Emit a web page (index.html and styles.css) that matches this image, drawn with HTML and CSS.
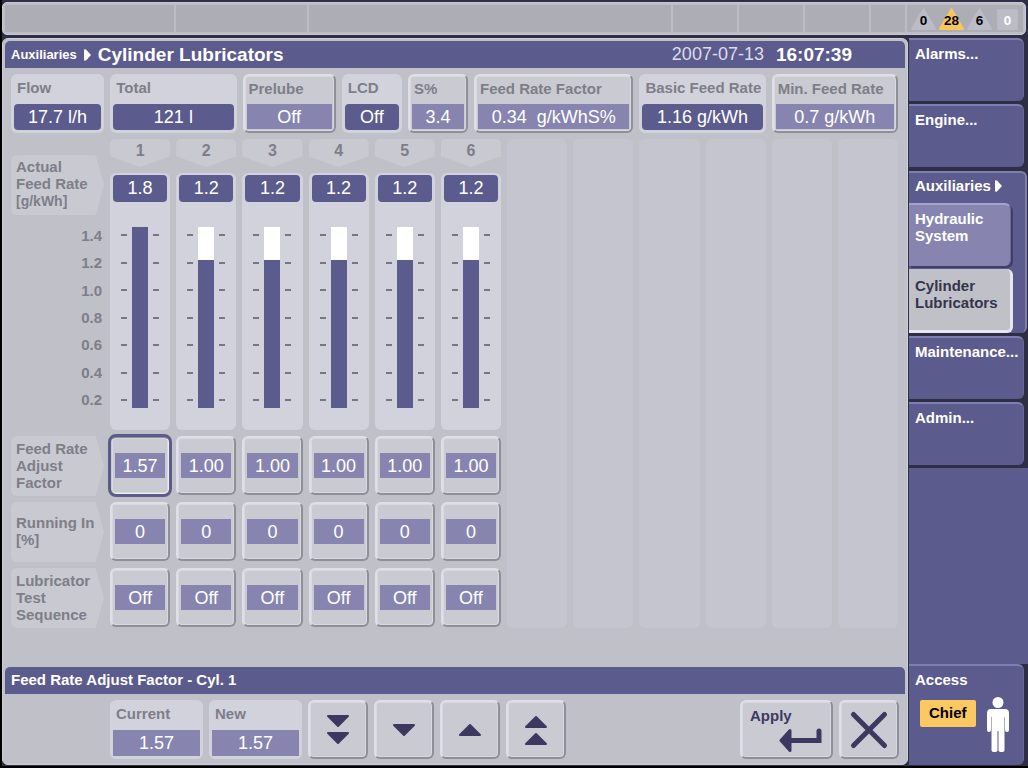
FILE: index.html
```html
<!DOCTYPE html>
<html lang="en">
<head>
<meta charset="utf-8">
<title>Cylinder Lubricators</title>
<link rel="stylesheet" href="styles.css">
</head>
<body>
<div class="screen">
  <header class="topbar">
    <div class="slots"><i></i><i></i><i></i><i></i><i></i><i></i><i></i></div>
    <div class="badges">
      <svg class="badge" viewBox="0 0 26 24" role="img" aria-label="0 alarms"><path class="tri" d="M13 3 24 22H2Z"/><text x="13" y="18">0</text></svg>
      <svg class="badge" viewBox="0 0 26 24" role="img" aria-label="28 unacknowledged"><path class="tri warn" d="M13 3 24 22H2Z"/><text x="13" y="18">28</text></svg>
      <svg class="badge" viewBox="0 0 26 24" role="img" aria-label="6 manual cut-out"><path class="tri" d="M13 3 24 22H2Z"/><text x="13" y="18">6</text></svg>
      <svg class="badge" viewBox="0 0 26 24" role="img" aria-label="0 invalidated"><path class="tri" d="M4 4H22V22H4Z"/><text class="pale" x="13" y="18">0</text></svg>
    </div>
  </header>

  <main class="panel">
    <div class="titlebar">
      <span class="crumb">Auxiliaries</span>
      <svg class="caret" viewBox="0 0 7 12"><path d="M0 1Q0 0 2 0.500L7 6 2 11.500Q0 12 0 11Z"/></svg>
      <h1>Cylinder Lubricators</h1>
      <span class="date">2007-07-13</span>
      <time class="time">16:07:39</time>
    </div>

    <div class="content">
      <section class="readings">
        <div class="card"><span class="label">Flow</span><span class="value">17.7 l/h</span></div>
        <div class="card"><span class="label">Total</span><span class="value">121 l</span></div>
        <button class="key card-key"><span class="label">Prelube</span><span class="value">Off</span></button>
        <div class="card"><span class="label">LCD</span><span class="value">Off</span></div>
        <button class="key card-key"><span class="label">S%</span><span class="value">3.4</span></button>
        <button class="key card-key"><span class="label">Feed Rate Factor</span><span class="value">0.34&nbsp; g/kWhS%</span></button>
        <div class="card"><span class="label">Basic Feed Rate</span><span class="value">1.16 g/kWh</span></div>
        <button class="key card-key"><span class="label">Min. Feed Rate</span><span class="value">0.7 g/kWh</span></button>
      </section>

      <section class="cylinders">
        <div class="axis">
          <div class="row-label">Actual<br>Feed Rate<br><span class="unit">[g/kWh]</span></div>
          <div class="scale"><span>1.4</span><span>1.2</span><span>1.0</span><span>0.8</span><span>0.6</span><span>0.4</span><span>0.2</span></div>
        </div>
        <div class="head">1</div><div class="head">2</div><div class="head">3</div><div class="head">4</div><div class="head">5</div><div class="head">6</div>
        <div class="spares"><i></i><i></i><i></i><i></i><i></i><i></i></div>

        <div class="gauge"><span class="value">1.8</span><div class="meter"><div class="ticks"><i></i><i></i><i></i><i></i><i></i><i></i><i></i></div><div class="bar"><div class="fill" style="height:100%"></div></div><div class="ticks"><i></i><i></i><i></i><i></i><i></i><i></i><i></i></div></div></div>
        <div class="gauge"><span class="value">1.2</span><div class="meter"><div class="ticks"><i></i><i></i><i></i><i></i><i></i><i></i><i></i></div><div class="bar"><div class="fill" style="height:82%"></div></div><div class="ticks"><i></i><i></i><i></i><i></i><i></i><i></i><i></i></div></div></div>
        <div class="gauge"><span class="value">1.2</span><div class="meter"><div class="ticks"><i></i><i></i><i></i><i></i><i></i><i></i><i></i></div><div class="bar"><div class="fill" style="height:82%"></div></div><div class="ticks"><i></i><i></i><i></i><i></i><i></i><i></i><i></i></div></div></div>
        <div class="gauge"><span class="value">1.2</span><div class="meter"><div class="ticks"><i></i><i></i><i></i><i></i><i></i><i></i><i></i></div><div class="bar"><div class="fill" style="height:82%"></div></div><div class="ticks"><i></i><i></i><i></i><i></i><i></i><i></i><i></i></div></div></div>
        <div class="gauge"><span class="value">1.2</span><div class="meter"><div class="ticks"><i></i><i></i><i></i><i></i><i></i><i></i><i></i></div><div class="bar"><div class="fill" style="height:82%"></div></div><div class="ticks"><i></i><i></i><i></i><i></i><i></i><i></i><i></i></div></div></div>
        <div class="gauge"><span class="value">1.2</span><div class="meter"><div class="ticks"><i></i><i></i><i></i><i></i><i></i><i></i><i></i></div><div class="bar"><div class="fill" style="height:82%"></div></div><div class="ticks"><i></i><i></i><i></i><i></i><i></i><i></i><i></i></div></div></div>

        <div class="row-label">Feed Rate<br>Adjust<br>Factor</div>
        <button class="key selected" aria-pressed="true"><span class="value">1.57</span></button>
        <button class="key"><span class="value">1.00</span></button>
        <button class="key"><span class="value">1.00</span></button>
        <button class="key"><span class="value">1.00</span></button>
        <button class="key"><span class="value">1.00</span></button>
        <button class="key"><span class="value">1.00</span></button>

        <div class="row-label">Running In<br>[%]</div>
        <button class="key"><span class="value">0</span></button>
        <button class="key"><span class="value">0</span></button>
        <button class="key"><span class="value">0</span></button>
        <button class="key"><span class="value">0</span></button>
        <button class="key"><span class="value">0</span></button>
        <button class="key"><span class="value">0</span></button>

        <div class="row-label">Lubricator<br>Test<br>Sequence</div>
        <button class="key"><span class="value">Off</span></button>
        <button class="key"><span class="value">Off</span></button>
        <button class="key"><span class="value">Off</span></button>
        <button class="key"><span class="value">Off</span></button>
        <button class="key"><span class="value">Off</span></button>
        <button class="key"><span class="value">Off</span></button>
      </section>
    </div>

    <h2 class="editbar">Feed Rate Adjust Factor - Cyl. 1</h2>
    <section class="editor">
      <div class="card edit"><span class="label">Current</span><span class="value">1.57</span></div>
      <div class="card edit"><span class="label">New</span><span class="value">1.57</span></div>
      <button class="key step" aria-label="Decrease fast"><svg class="icon" viewBox="0 0 54 54"><path class="arrow" d="M17 13H37L27 23ZM17 30H37L27 40Z"/></svg></button>
      <button class="key step" aria-label="Decrease"><svg class="icon" viewBox="0 0 54 54"><path class="arrow" d="M17 22H37L27 32Z"/></svg></button>
      <button class="key step" aria-label="Increase"><svg class="icon" viewBox="0 0 54 54"><path class="arrow" d="M17 32H37L27 22Z"/></svg></button>
      <button class="key step" aria-label="Increase fast"><svg class="icon" viewBox="0 0 54 54"><path class="arrow" d="M17 24H37L27 14ZM17 41H37L27 31Z"/></svg></button>
      <button class="key apply"><span>Apply</span><svg class="enter" viewBox="0 0 44 24"><path class="head-shape" d="M2 12.500 11 2.500V22.500Z"/><path class="stem" d="M10 12.500H40V3"/></svg></button>
      <button class="key step" aria-label="Cancel"><svg class="icon" viewBox="0 0 54 54"><path class="cross" d="M11.500 11.500 42.500 42.500M42.500 11.500 11.500 42.500"/></svg></button>
    </section>
  </main>

  <nav class="side">
    <button class="tab">Alarms...</button>
    <button class="tab">Engine...</button>
    <div class="group">
      <button class="group-title">Auxiliaries <svg class="caret" viewBox="0 0 7 12"><path d="M0 1Q0 0 2 0.500L7 6 2 11.500Q0 12 0 11Z"/></svg></button>
      <button class="tab sub">Hydraulic<br>System</button>
      <button class="tab sub current" aria-current="page">Cylinder<br>Lubricators</button>
    </div>
    <button class="tab">Maintenance...</button>
    <button class="tab">Admin...</button>
    <div class="filler"></div>
    <button class="tab access">
      <span>Access</span>
      <span class="access-row"><span class="role">Chief</span>
      <svg class="person" viewBox="0 0 22 56"><circle cx="11" cy="5.500" r="5.500"/><path d="M4 12H18Q22 12 22 16V33Q22 35 20 35T18 33V20H17.500V53Q17.500 55 14.500 55T11.500 53V34H10.500V53Q10.500 55 7.500 55T4.500 53V20H4V33Q4 35 2 35T0 33V16Q0 12 4 12Z"/></svg></span>
    </button>
  </nav>
</div>
</body>
</html>
```
FILE: styles.css
```css
:root {
  --ink: #5c5b8d;
  --ink-dark: #3c3960;
  --soft: #8785b0;
  --panel: #c0c0c9;
  --card: #d2d2dd;
  --key: #cacad3;
  --light: #dfdfe8;
  --shade: #8f8f97;
  --text: #7e7e88;
}

* { box-sizing: border-box; }

body {
  margin: 0;
  background: #000;
  font: bold 15px/17px "Liberation Sans", Arial, sans-serif;
  color: var(--text);
}

button {
  margin: 0;
  padding: 0;
  border: 0;
  font: inherit;
  color: inherit;
  text-align: left;
  cursor: pointer;
}

h1, h2 { margin: 0; font: inherit; }
svg { display: block; }

.screen {
  min-height: 100vh;
  display: grid;
  grid-template-columns: minmax(0, 1fr) 120px;
  grid-template-rows: 33px minmax(0, 1fr);
  row-gap: 3px;
  padding: 2px 0 1px 2px;
  border-bottom: 2px solid #000;
  background: linear-gradient(90deg, #000 2px, #2e2e44 2px);
}

/* Top status strip */
.topbar {
  grid-column: 1 / -1;
  display: grid;
  grid-template-columns: minmax(0, 1fr) 118px;
  margin-right: 2px;
  padding: 2px;
  border: 1px solid #c8c8d0;
  border-radius: 5px;
  background: #bdbdc6;
}

.slots {
  display: grid;
  grid-template-columns: 169fr 131fr 362fr 64fr 64fr 64fr 34fr;
  gap: 2px;
}

.slots i { background: #adadb6; }

.badges {
  display: flex;
  align-items: center;
  justify-content: space-between;
  padding: 0 2px 0 3px;
  background: #adadb6;
  margin-left: 2px;
}

.badge { width: 27px; height: 25px; }
.badge text { font-size: 13px; text-anchor: middle; fill: #000; }
.badge .pale { fill: #fff; }
.tri { fill: #bcbcc7; stroke: #bcbcc7; stroke-width: 2; stroke-linejoin: round; }
.tri.warn { fill: #f8c65c; stroke: #f8c65c; }

/* Main panel */
.panel {
  display: flex;
  flex-direction: column;
  min-width: 0;
  padding: 2px;
  border: 1px solid #cdcdd8;
  border-radius: 6px;
  background: var(--panel);
}

.titlebar {
  display: flex;
  align-items: center;
  height: 27px;
  padding: 0 53px 0 6px;
  border-radius: 5px 5px 0 0;
  background: var(--ink);
  color: #fff;
}

.crumb { font-size: 13px; }
.caret { width: 7px; height: 12px; fill: currentColor; }
.titlebar .caret { margin: 0 7px; }
.titlebar h1 { flex: 1; font-size: 19px; }
.date { font-size: 18px; font-weight: normal; color: #dcdcec; }
.time { margin-left: 12px; font-size: 19px; }

.content {
  flex: 1;
  display: flex;
  flex-direction: column;
  gap: 6px;
  padding: 6px 7px 30px 6px;
}

.readings {
  display: grid;
  grid-template-columns: 93fr 126fr 93fr 60fr 60fr 159fr 126fr 126fr;
  gap: 6px;
}

.card, .card-key, .gauge {
  display: flex;
  flex-direction: column;
  min-width: 0;
  height: 59px;
  white-space: nowrap;
}

.card {
  padding: 3px;
  border-radius: 6px;
  background: var(--card);
}

.card .label { height: 27px; padding: 2px 3px; }

.value {
  display: block;
  height: 25px;
  font-size: 18px;
  font-weight: normal;
  line-height: 26px;
  text-align: center;
  color: #fff;
  background: var(--soft);
}

.card .value, .gauge .value {
  height: 27px;
  border-radius: 4px;
  background: var(--ink);
}

.card.edit .value { border-radius: 0; background: var(--soft); }

.key {
  height: 59px;
  padding: 0 3px 1px;
  border: 2px solid;
  border-color: var(--light) var(--shade) var(--shade) var(--light);
  border-radius: 6px;
  background: var(--key);
  box-shadow: inset 0 0 0 1px #d8d8e2;
}

.card-key { padding: 2px; }
.card-key .label { height: 26px; padding: 2px; }

/* Cylinder matrix */
.cylinders {
  display: grid;
  grid-template-columns: 93px repeat(12, minmax(0, 1fr));
  grid-template-rows: 28px 257px 60px 60px 60px;
  gap: 6px;
}

.axis { grid-row: 1 / 3; grid-column: 1; padding-top: 16px; }

.row-label {
  grid-column: 1;
  height: 60px;
  align-content: center;
  padding: 0 5px 2px;
  border-radius: 6px 0 0 6px;
  background: #c9c9d2;
  clip-path: polygon(0 0, 91% 0, 100% 50%, 91% 100%, 0 100%);
  white-space: nowrap;
}

.unit { font-size: 14px; }

.scale {
  display: flex;
  flex-direction: column;
  justify-content: space-between;
  height: 181px;
  margin-top: 12px;
  padding-right: 2px;
  text-align: right;
}

.head {
  height: 28px;
  font-size: 16px;
  line-height: 24px;
  text-align: center;
  background: #c9c9d2;
  border-radius: 5px 5px 0 0;
  clip-path: polygon(0 0, 100% 0, 100% 62%, 50% 100%, 0 62%);
}

.spares {
  grid-area: 1 / 8 / 6 / 14;
  display: grid;
  grid-template-columns: repeat(6, minmax(0, 1fr));
  gap: 6px;
}

.spares i {
  border-radius: 6px;
  background: #c5c5cf;
}

.gauge {
  height: 257px;
  padding: 2px 3px;
  border-radius: 6px;
  background: var(--card);
}

.meter {
  display: flex;
  justify-content: center;
  gap: 5px;
  height: 181px;
  margin-top: 25px;
}

.ticks {
  display: flex;
  flex-direction: column;
  justify-content: space-between;
  width: 6px;
  padding: 7px 0;
}

.ticks i { height: 2px; background: #77777f; }

.bar {
  display: flex;
  align-items: flex-end;
  width: 16px;
  background: #fff;
}

.fill { width: 100%; background: var(--ink); }

.selected {
  border-color: var(--shade) #f0f0f8 #f0f0f8 var(--key);
  outline: 3px solid var(--ink);
  outline-offset: -1px;
}

/* Editor strip */
.editbar {
  height: 27px;
  padding: 0 6px;
  border-radius: 5px 5px 0 0;
  line-height: 26px;
  background: var(--ink);
  color: #fff;
}

.editor {
  display: flex;
  gap: 6px;
  padding: 6px 6px 3px 105px;
}

.edit { width: 93px; }
.step { width: 60px; padding: 0; }
.icon { width: 54px; height: 54px; margin: 0 auto; }
.arrow { fill: var(--ink-dark); stroke: var(--ink-dark); stroke-width: 2; stroke-linejoin: round; }
.cross { fill: none; stroke: var(--ink-dark); stroke-width: 5; stroke-linecap: round; }

.apply {
  display: flex;
  flex-direction: column;
  width: 93px;
  margin-left: auto;
  padding: 5px 8px 0;
  color: var(--ink-dark);
}

.enter { align-self: flex-end; width: 44px; height: 24px; margin-top: 4px; }
.head-shape { fill: var(--ink-dark); stroke: var(--ink-dark); stroke-width: 3; stroke-linejoin: round; }
.stem { fill: none; stroke: var(--ink-dark); stroke-width: 5; stroke-linecap: round; stroke-linejoin: miter; }

/* Side navigation */
.side {
  display: flex;
  flex-direction: column;
  gap: 3px;
  padding-left: 1px;
  color: #fff;
}

.tab {
  display: flex;
  align-items: flex-start;
  height: 63px;
  margin-right: 4px;
  padding: 5px 6px;
  border-top: 2px solid #7f7eb0;
  border-right: 1px solid #68679b;
  border-radius: 0 6px 6px 0;
  background: var(--ink);
  white-space: nowrap;
}

.group {
  display: flex;
  flex-direction: column;
  gap: 3px;
  margin: 1px 1px 0 0;
  border-top: 2px solid #7f7eb0;
  border-right: 2px solid #7f7eb0;
  border-radius: 0 6px 6px 0;
  background: var(--ink);
}

.group-title {
  display: flex;
  align-items: center;
  gap: 4px;
  height: 27px;
  padding: 0 6px 2px;
  background: none;
}

.sub {
  margin-right: 14px;
  border-top-color: #a5a3cb;
  background: var(--soft);
  box-shadow: 2px 2px 0 #413f68;
}

.current {
  height: 64px;
  margin-right: 12px;
  padding-top: 8px;
  border: solid #e6e6f0;
  border-width: 0 3px 3px 0;
  background: var(--panel);
  color: #34344c;
  box-shadow: none;
}

.filler { flex: 1; margin-bottom: -3px; background: var(--ink); }

.access {
  flex-direction: column;
  height: 101px;
}

.access-row {
  display: flex;
  justify-content: space-between;
  align-self: stretch;
  padding: 9px 8px 0 5px;
}

.role {
  height: 27px;
  margin-top: 3px;
  padding: 0 9px;
  border-radius: 2px;
  line-height: 26px;
  background: #fcc860;
  color: #000;
}

.person { width: 22px; height: 56px; fill: #fff; }
```
